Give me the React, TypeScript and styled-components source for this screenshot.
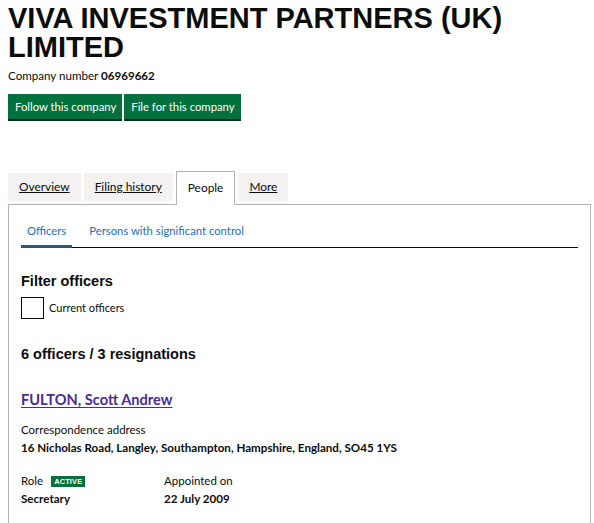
import React from "react";
import styled, { createGlobalStyle } from "styled-components";

const Global = createGlobalStyle`
  html, body { margin: 0; padding: 0; background: #fff; }
  body { font-family: Lato, "Noto Sans", sans-serif; color: #0b0c0c; }
  * { box-sizing: border-box; }
`;

const Page = styled.div`
  padding: 0 4px 0 8px;
  width: 594px;
`;

const Title = styled.h1`
  margin: 4px 0 0;
  font-family: "Liberation Sans", Arial, sans-serif;
  font-weight: 700;
  font-size: 29px;
  line-height: 29px;
`;

const CompanyNumber = styled.p`
  margin: 6px 0 0;
  font-size: 11.6px;
  line-height: 16px;
  strong { font-weight: 700; }
`;

const ButtonRow = styled.div`
  display: flex;
  gap: 2px;
  margin-top: 10px;
`;

const Button = styled.button`
  font-family: inherit;
  font-size: 11.3px;
  line-height: 16px;
  color: #fff;
  background: #00703c;
  border: 0;
  box-shadow: 0 2px 0 #002d18;
  padding: 5px 6px 4px 7px;
  height: 25px;
  margin-bottom: 2px;
`;

const TabList = styled.div`
  display: flex;
  align-items: flex-end;
  gap: 3px;
  margin-top: 50px;
  margin-bottom: -1px;
  position: relative;
`;

const Tab = styled.a<{ $active?: boolean }>`
  display: block;
  font-size: 11.9px;
  line-height: 16px;
  color: #0b0c0c;
  text-decoration: ${(p) => (p.$active ? "none" : "underline")};
  text-underline-offset: 1px;
  background: ${(p) => (p.$active ? "#fff" : "#f3f2f1")};
  border: ${(p) => (p.$active ? "1px solid #b1b4b6" : "0")};
  border-bottom: 0;
  padding: ${(p) => (p.$active ? "8px 11px 10px" : "6px 11px 6px")};
  margin-bottom: ${(p) => (p.$active ? "0" : "4px")};
  height: ${(p) => (p.$active ? "34px" : "28px")};
`;

const Panel = styled.div`
  border: 1px solid #b1b4b6;
  border-bottom: 0;
  width: 583px;
  padding: 11px 12px 20px;
  min-height: 330px;
`;

const SubTabs = styled.div`
  display: flex;
  gap: 11px;
  border-bottom: 1px solid #0b0c0c;
`;

const SubTab = styled.a<{ $active?: boolean }>`
  font-size: 11.3px;
  line-height: 16px;
  color: #1d70b8;
  padding: 7px 6px 6px;
  border-bottom: 3px solid ${(p) => (p.$active ? "#1d5a8e" : "transparent")};
  margin-bottom: -1px;
  text-decoration: none;
`;

const Heading = styled.h2<{ $top: number }>`
  margin: ${(p) => p.$top}px 0 0;
  font-family: "Liberation Sans", Arial, sans-serif;
  font-weight: 700;
  font-size: 14.5px;
  line-height: 18px;
`;

const CheckRow = styled.label`
  display: flex;
  align-items: center;
  gap: 5px;
  margin-top: 7px;
  font-size: 11px;
  line-height: 16px;
`;

const Box = styled.span`
  width: 23px;
  height: 22px;
  border: 1.5px solid #0b0c0c;
  display: inline-block;
`;

const NameLink = styled.a`
  display: block;
  margin-top: 27px;
  font-size: 14.6px;
  line-height: 20px;
  font-weight: 700;
  color: #4c2c92;
  text-decoration: underline;
  text-underline-offset: 2px;
`;

const Label = styled.div<{ $top?: number }>`
  font-size: 11.5px;
  line-height: 16px;
  margin-top: ${(p) => p.$top ?? 0}px;
  display: flex;
  align-items: center;
  gap: 8px;
`;

const Value = styled.div`
  font-size: 11.6px;
  line-height: 16px;
  font-weight: 700;
  margin-top: 2px;
`;

const Details = styled.div`
  display: grid;
  grid-template-columns: 143px auto;
  margin-top: 17px;
`;

const Tag = styled.span`
  background: #00703c;
  color: #fff;
  font-family: "Liberation Sans", Arial, sans-serif;
  font-weight: 700;
  font-size: 7.5px;
  letter-spacing: 0.1px;
  line-height: 11px;
  padding: 0 3px;
`;

export default function App() {
  return (
    <Page>
      <Global />
      <Title>VIVA INVESTMENT PARTNERS (UK) LIMITED</Title>
      <CompanyNumber>
        Company number <strong>06969662</strong>
      </CompanyNumber>
      <ButtonRow>
        <Button>Follow this company</Button>
        <Button>File for this company</Button>
      </ButtonRow>
      <TabList>
        <Tab href="#">Overview</Tab>
        <Tab href="#">Filing history</Tab>
        <Tab $active>People</Tab>
        <Tab href="#">More</Tab>
      </TabList>
      <Panel>
        <SubTabs>
          <SubTab $active>Officers</SubTab>
          <SubTab>Persons with significant control</SubTab>
        </SubTabs>
        <Heading $top={24}>Filter officers</Heading>
        <CheckRow>
          <Box />
          Current officers
        </CheckRow>
        <Heading $top={26}>6 officers / 3 resignations</Heading>
        <NameLink href="#">FULTON, Scott Andrew</NameLink>
        <Label $top={12}>Correspondence address</Label>
        <Value>16 Nicholas Road, Langley, Southampton, Hampshire, England, SO45 1YS</Value>
        <Details>
          <div>
            <Label>
              Role <Tag>ACTIVE</Tag>
            </Label>
            <Value>Secretary</Value>
          </div>
          <div>
            <Label>Appointed on</Label>
            <Value>22 July 2009</Value>
          </div>
        </Details>
      </Panel>
    </Page>
  );
}
